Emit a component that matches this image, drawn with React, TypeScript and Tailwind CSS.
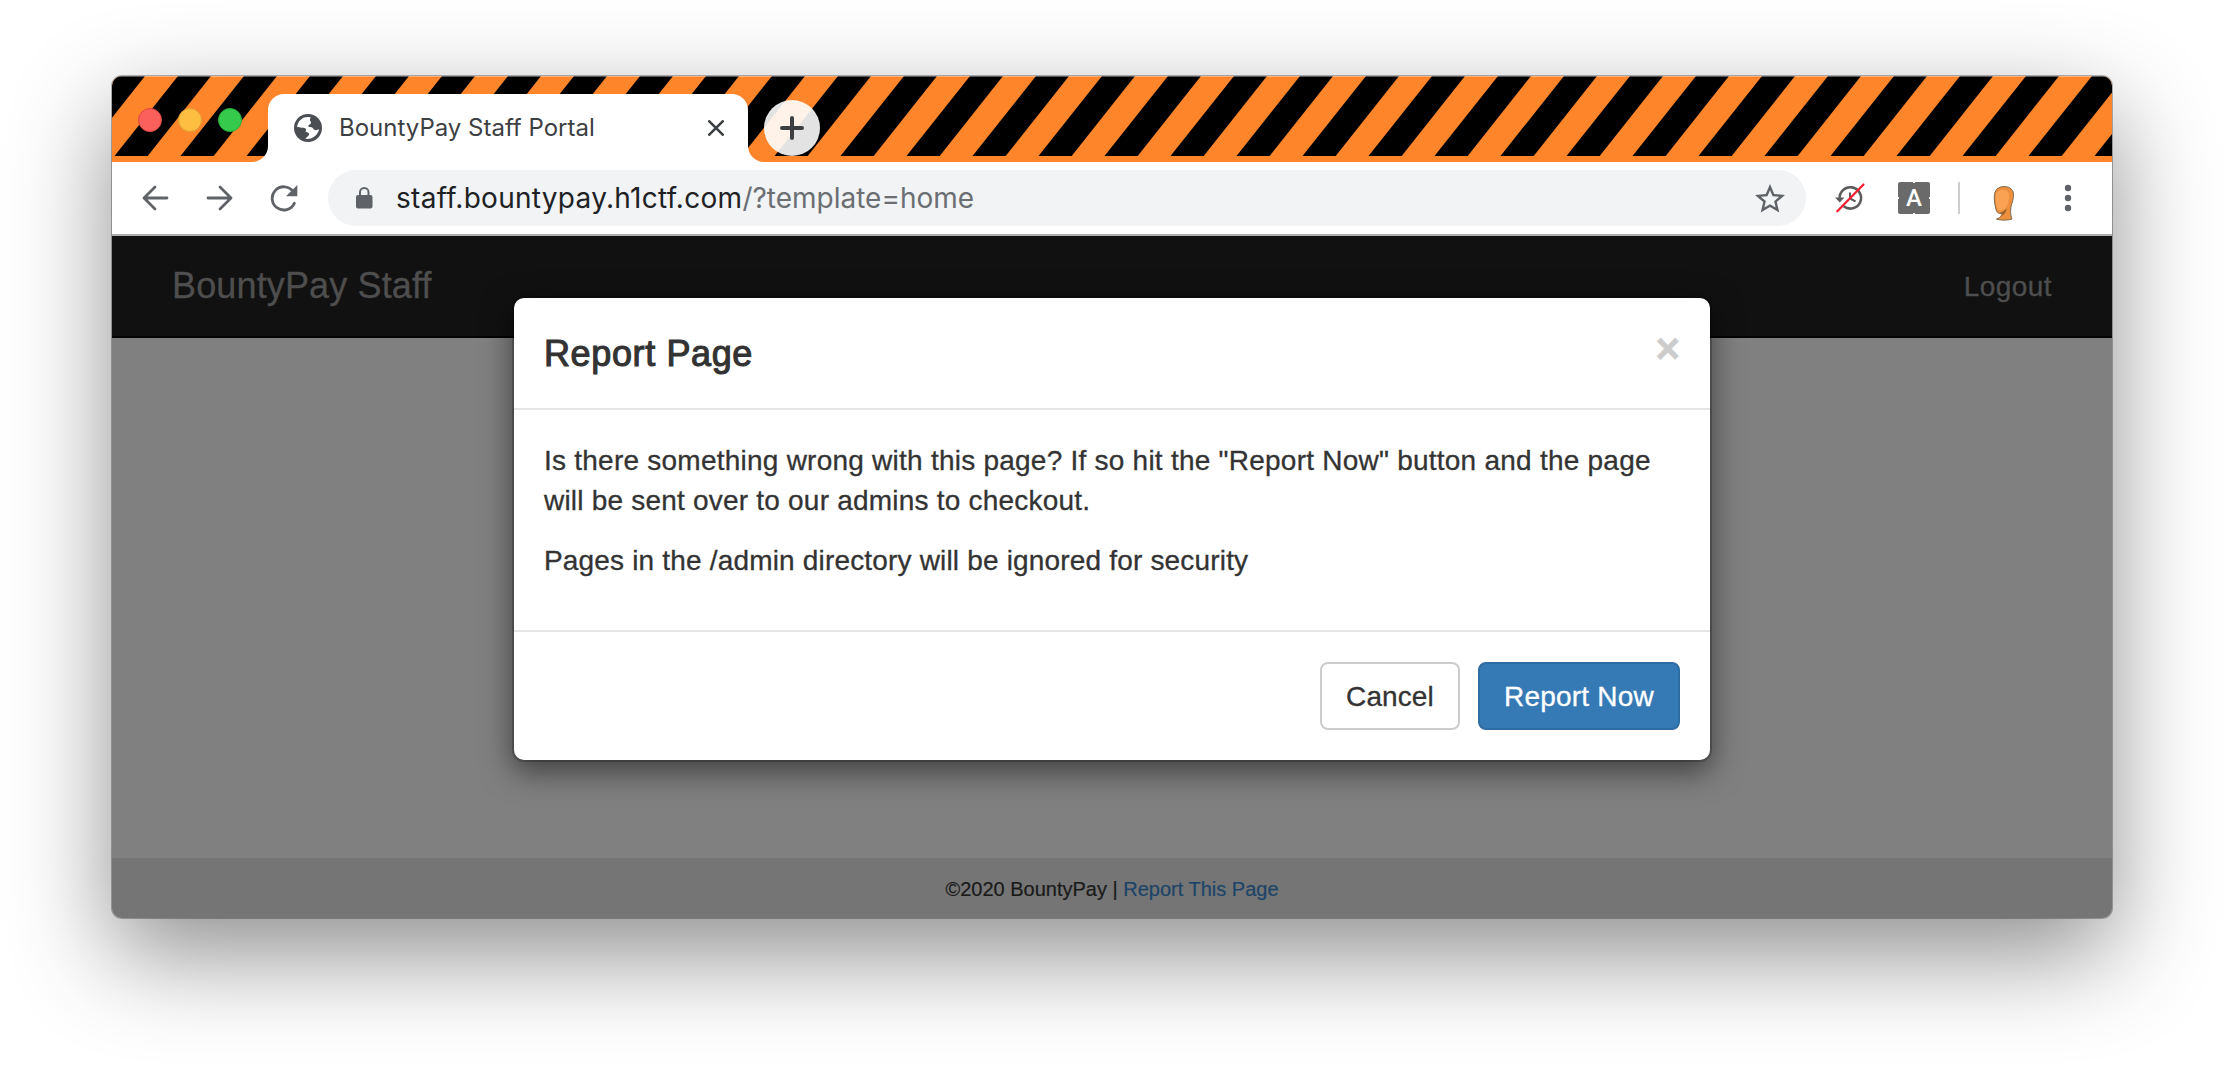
const STRIPES = Array.from({ length: 32 }, (_, i) => i * 66 - 64);

function HazardStripes() {
  return (
    <svg className="absolute inset-0" width="2000" height="86" viewBox="0 0 2000 86" aria-hidden="true">
      <rect width="2000" height="86" fill="#ff852b" />
      {STRIPES.map((x) => (
        <polygon key={x} points={`${x + 0.5},80 ${x + 33.7},80 ${x + 97},0 ${x + 64},0`} fill="#000" />
      ))}
      <rect width="2000" height="1" fill="#fff" opacity="0.35" />
    </svg>
  );
}

function GlobeIcon() {
  return (
    <svg width="28" height="28" viewBox="0 0 28 28" className="shrink-0">
      <circle cx="14" cy="14" r="14" fill="#4b4f54" />
      <path
        d="M10.200 3.600C6.600 5 3.600 8.500 3.100 13C5.500 13.700 7.200 13.500 9.500 13.800C12.300 14.200 12.600 16 11.400 17.600C12.900 18.600 14.700 18.300 15.200 20C15.400 21.500 13.300 22.400 11.300 24.800C17.500 26 24.400 21.500 25 14.800C23.600 16.600 21.500 16.500 19.800 15.600C18.800 13.600 17.500 13 15.300 13C14 12.600 14 11.200 15.500 10.600C17.200 10 17.200 8.500 16.600 7.500C15.400 6 16 4.500 16.800 3.500C14.500 2.900 12.300 2.900 10.200 3.600Z"
        fill="#fff"
      />
    </svg>
  );
}

function Tab() {
  return (
    <div className="relative ml-[38px] mt-[18px] flex h-[68px] w-[480px] items-center rounded-t-[16px] bg-white pl-[26px] pr-[24px]">
      <svg className="absolute -left-4 bottom-0" width="16" height="16" viewBox="0 0 16 16">
        <path d="M16 0A16 16 0 0 1 0 16H16Z" fill="#fff" />
      </svg>
      <svg className="absolute -right-4 bottom-0" width="16" height="16" viewBox="0 0 16 16">
        <path d="M0 0A16 16 0 0 0 16 16H0Z" fill="#fff" />
      </svg>
      <GlobeIcon />
      <span className="-mt-px ml-[17px] flex-1 whitespace-nowrap text-[24px] leading-8 text-[#3c4043]">
        BountyPay Staff Portal
      </span>
      <svg width="16" height="16" viewBox="0 0 16 16">
        <path d="M1.300 1.300L14.700 14.700M14.700 1.300L1.300 14.700" stroke="#3c4043" strokeWidth="2.600" strokeLinecap="round" />
      </svg>
    </div>
  );
}

function TabStrip() {
  return (
    <div className="relative h-[86px]">
      <HazardStripes />
      <div className="relative flex">
        <div className="ml-[26px] mt-[32px] flex gap-4">
          <span className="size-6 rounded-full border border-[#e2463f] bg-[#fc605c]" />
          <span className="size-6 rounded-full border border-[#e0a035] bg-[#fdbe41]" />
          <span className="size-6 rounded-full border border-[#27ac37] bg-[#35ca4b]" />
        </div>
        <div className="-ml-[12px]">
          <Tab />
        </div>
        <div className="ml-4 mt-6 flex size-14 items-center justify-center rounded-full bg-white/[.89]">
          <svg width="24" height="24" viewBox="0 0 24 24">
            <path d="M12 2V22M2 12H22" stroke="#3c4043" strokeWidth="4" strokeLinecap="round" />
          </svg>
        </div>
      </div>
    </div>
  );
}

function Toolbar() {
  return (
    <div className="flex h-[74px] items-center border-b-2 border-[#adafae] bg-white text-[#5f6368]">
      <svg className="ml-[30px]" width="27" height="26" viewBox="0 0 27 26" fill="none" stroke="currentColor" strokeWidth="2.800" strokeLinecap="round" strokeLinejoin="round">
        <path d="M25 13H2M13 2L2 13L13 24" />
      </svg>
      <svg className="ml-[37px]" width="27" height="26" viewBox="0 0 27 26" fill="none" stroke="currentColor" strokeWidth="2.800" strokeLinecap="round" strokeLinejoin="round">
        <path d="M2 13H25M14 2L25 13L14 24" />
      </svg>
      <svg className="ml-[37px]" width="28" height="27" viewBox="0 0 28 27">
        <path d="M24.300 18.300A11.600 11.600 0 1 1 23 6.300" fill="none" stroke="currentColor" strokeWidth="2.800" strokeLinecap="round" />
        <path d="M27.300 0V11.300H16Z" fill="currentColor" />
      </svg>

      <div className="ml-[30px] flex h-[56px] w-[1478px] items-center rounded-full bg-[#f1f3f4]">
        <svg className="ml-[28px]" width="17" height="22" viewBox="0 0 17 22">
          <rect y="8" width="16.500" height="13.500" rx="2" fill="currentColor" />
          <path d="M4 9V5.300A4.250 4.250 0 0 1 12.500 5.300V9" fill="none" stroke="currentColor" strokeWidth="2" />
        </svg>
        <span className="ml-[23px] flex-1 whitespace-nowrap text-[28px] leading-10 text-[#202124]">
          <span className="tracking-[0.29px]">staff.bountypay.h1ctf.com</span>
          <span className="text-[#6b6e72]">/?template=home</span>
        </span>
        <svg className="mr-[21px]" width="30" height="29" viewBox="2 2 20 19.300" fill="currentColor">
          <path d="M22 9.240l-7.190-.62L12 2 9.190 8.630 2 9.240l5.460 4.730L5.820 21 12 17.270 18.180 21l-1.630-7.030L22 9.240zM12 15.400l-3.760 2.270 1-4.280-3.320-2.880 4.380-.38L12 6.100l1.710 4.040 4.380.38-3.320 2.880 1 4.280L12 15.400z" />
        </svg>
      </div>

      <svg className="ml-[28px]" width="32" height="32" viewBox="0 0 32 32">
        <path d="M5.700 17A10.700 10.700 0 1 1 9.700 24.300" fill="none" stroke="#5c5c5c" strokeWidth="2.600" />
        <path d="M1 15.500H10.500L5.800 20.500Z" fill="#5c5c5c" />
        <path d="M16 10.500V16.500L21.500 19.500" fill="none" stroke="#5c5c5c" strokeWidth="2" />
        <path d="M3.300 29.300L29.500 2.500" stroke="#fb1c2e" strokeWidth="2.200" strokeLinecap="round" />
      </svg>

      <div className="relative ml-[32px] flex size-8 items-center justify-center rounded-[2px] bg-[#6a6a6a] font-[Roboto] text-[24px] font-medium leading-8 text-white">
        A
        <span className="absolute left-[15px] top-0 h-px w-[2px] bg-white" />
        <span className="absolute bottom-0 left-[15px] h-px w-[2px] bg-white" />
        <span className="absolute left-0 top-[15px] h-[2px] w-px bg-white" />
        <span className="absolute right-0 top-[15px] h-[2px] w-px bg-white" />
      </div>

      <span className="ml-7 h-8 w-[2px] bg-[#cdcdcd]" />

      <svg className="ml-[32px] mt-[10px]" width="24" height="36" viewBox="0 0 24 36">
        <path
          d="M2.300 12C2.300 5 6 1.600 12 1.600C18.500 1.600 22 5 21.500 11.500C21 17 18.600 20.500 18.600 25C18.600 29 18.800 31.500 20 34C15 35.600 8.500 35.500 4.500 34C7.500 33 9.800 31.300 9.400 28.600C6.500 28.900 4.600 27.300 4 24.300C2.800 20 2.300 16 2.300 12Z"
          fill="#ee8f3d"
          stroke="#7d6a4a"
          strokeWidth="1"
        />
        <path d="M3.600 12C3.800 7.500 6.500 4.800 11 5C15.500 5 17.300 7.500 17 12C16.500 18.500 14.500 23.500 10.500 25.500C7 26.500 5.300 25 4.800 22C4 18.500 3.500 15.500 3.600 12Z" fill="#f9a254" />
        <path d="M8 27.600C11.500 27 13.500 25 14.800 23C14.300 26.500 12.500 29.300 10.300 31C10.600 29.600 10.300 28.500 9.400 28.200Z" fill="#96602c" />
      </svg>

      <svg className="ml-[48px]" width="8" height="28" viewBox="0 0 8 28" fill="currentColor">
        <circle cx="4" cy="4" r="3.200" />
        <circle cx="4" cy="14" r="3.200" />
        <circle cx="4" cy="24" r="3.200" />
      </svg>
    </div>
  );
}

function ReportModal() {
  return (
    <div className="absolute left-[402px] top-[62px] w-[1196px] rounded-[10px] bg-white text-[28px] leading-10 text-[#333] shadow-[0_0_0_2px_rgba(0,0,0,0.2),0_10px_30px_2px_rgba(0,0,0,0.5)] [-webkit-text-stroke:0.3px]">
      <div className="flex h-[112px] justify-between border-b-2 border-[#e5e5e5] px-[30px] pt-[30px]">
        <h4 className="text-[36px] leading-[51px] tracking-[0.62px] [-webkit-text-stroke:1.1px_#333]">Report Page</h4>
        <button className="h-[42px] text-[42px] font-bold leading-[42px] text-[#ccc] [-webkit-text-stroke:0.6px_#ccc]">×</button>
      </div>
      <div className="h-[220px] whitespace-nowrap px-[30px] pt-[31px]">
        <p className="mb-5">
          <span className="tracking-[0.238px]">
            Is there something wrong with this page? If so hit the "Report Now" button and the page
          </span>
          <br />
          <span className="tracking-[0.21px]">will be sent over to our admins to checkout.</span>
        </p>
        <p className="tracking-[0.175px]">Pages in the /admin directory will be ignored for security</p>
      </div>
      <div className="flex h-[130px] justify-end gap-[18px] border-t-2 border-[#e5e5e5] px-[30px] pt-[30px]">
        <button className="h-[68px] w-[140px] rounded-[8px] border-2 border-[#ccc] bg-white pt-[2px] tracking-[0.1px]">Cancel</button>
        <button className="h-[68px] w-[202px] rounded-[8px] border-2 border-[#2e6da4] bg-[#367ab5] pt-[2px] tracking-[0.2px] text-white">
          Report Now
        </button>
      </div>
    </div>
  );
}

function Page() {
  return (
    <div className="relative flex h-[682px] flex-col bg-[#808080] font-['Liberation_Sans',Arial,sans-serif]">
      <nav className="flex h-[102px] items-center justify-between border-b-2 border-[#040404] bg-[#111] px-[60px] text-[#4e4e4e] [-webkit-text-stroke:0.3px]">
        <span className="text-[36px] leading-10 tracking-[0.14px]">BountyPay Staff</span>
        <span className="mt-[2px] text-[28px] leading-10 tracking-[0.45px]">Logout</span>
      </nav>
      <main className="flex-1" />
      <footer className="h-[60px] bg-[#757575] pt-[2px] text-center text-[20px] leading-[58px] text-[#1a1a1a] [-webkit-text-stroke:0.2px]">
        ©2020 BountyPay | <a className="text-[#1d4468]">Report This Page</a>
      </footer>
      <ReportModal />
    </div>
  );
}

export default function App() {
  return (
    <div className="h-[1066px] w-[2224px] overflow-hidden bg-white pl-[112px] pt-[76px] font-[Inter,sans-serif]">
      <div className="w-[2000px] rounded-[10px] shadow-[0_0_0_1px_rgba(0,0,0,0.28),0_36px_100px_rgba(0,0,0,0.45)]">
        <div className="overflow-hidden rounded-[10px]">
          <TabStrip />
          <Toolbar />
          <Page />
        </div>
      </div>
    </div>
  );
}
